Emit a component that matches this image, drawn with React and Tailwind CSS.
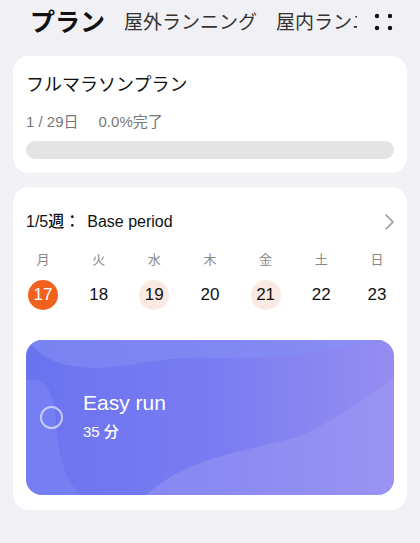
import React from 'react';

const days = [
    { w: '月', d: 17, state: 'today' },
    { w: '火', d: 18 },
    { w: '水', d: 19, state: 'plan' },
    { w: '木', d: 20 },
    { w: '金', d: 21, state: 'plan' },
    { w: '土', d: 22 },
    { w: '日', d: 23 },
];

function DotsIcon() {
    return (
        <svg width="20" height="20" viewBox="0 0 20 20" className="shrink-0">
            <circle cx="3" cy="4" r="2.2" fill="#111" />
            <circle cx="16" cy="4" r="2.2" fill="#111" />
            <circle cx="3" cy="16" r="2.2" fill="#111" />
            <circle cx="16" cy="16" r="2.2" fill="#111" />
        </svg>
    );
}

export default function App() {
    return (
        <div className="w-[420px] h-[543px] bg-[#f1f1f5] overflow-hidden text-[#111]" style={{ fontFamily: '"Liberation Sans", "Noto Sans CJK JP", sans-serif' }}>
            {/* header tabs */}
            <div className="h-[44px] flex items-center pl-[30px] pr-[26px]">
                <div className="flex-1 flex items-center gap-[19px] overflow-hidden whitespace-nowrap">
                    <span className="text-[25px] font-bold leading-[32px]">プラン</span>
                    <span className="text-[19px] leading-[28px] text-[#333] pt-[1px]">屋外ランニング</span>
                    <span className="text-[19px] leading-[28px] text-[#333] pt-[1px]">屋内ランニング</span>
                </div>
                <div className="pl-[17px] bg-[#f1f1f5]">
                    <DotsIcon />
                </div>
            </div>

            {/* plan card */}
            <div className="mx-[13px] mt-[12px] bg-white rounded-[16px] px-[13px] pt-[16px] pb-[14px]">
                <div className="text-[18px] leading-[26px]">フルマラソンプラン</div>
                <div className="mt-[14px] text-[15px] leading-[20px] text-[#777] flex gap-[20px]">
                    <span>1 / 29日</span>
                    <span>0.0%完了</span>
                </div>
                <div className="mt-[9px] h-[18px] rounded-full bg-[#e4e4e4]" />
            </div>

            {/* week card */}
            <div className="mx-[13px] mt-[14px] bg-white rounded-[16px] px-[13px] pt-[23px] pb-[15px]">
                <div className="flex items-center h-[24px]">
                    <span className="text-[16px] leading-[24px] font-medium">1/5週：</span>
                    <span className="text-[16px] leading-[24px] ml-[7px]">Base period</span>
                    <svg className="ml-auto mr-[-1px]" width="12" height="18" viewBox="0 0 12 18">
                        <path d="M3 2 L10 9 L3 16" fill="none" stroke="#999" strokeWidth="1.6" strokeLinecap="round" strokeLinejoin="round" />
                    </svg>
                </div>
                <div className="mt-[16px] flex justify-between px-[2px]">
                    {days.map(day => (
                        <div key={day.w} className="w-[30px] flex flex-col items-center">
                            <span className="text-[13px] leading-[20px] text-[#888]">{day.w}</span>
                            <span className={
                                'mt-[10px] w-[30px] h-[30px] rounded-full flex items-center justify-center text-[17px] font-medium ' +
                                (day.state === 'today' ? 'bg-[#f2621f] text-white' : day.state === 'plan' ? 'bg-[#fbeae3] text-[#111]' : 'text-[#111]')
                            }>{day.d}</span>
                        </div>
                    ))}
                </div>

                <div className="relative mt-[30px] h-[155px] rounded-[16px] overflow-hidden bg-gradient-to-r from-[#6a73ef] via-[#787cf2] to-[#968df1]">
                    <svg className="absolute inset-0" width="368" height="155" viewBox="0 0 368 155" preserveAspectRatio="none">
                        <path d="M0 0 H368 V0 C300 10 250 20 180 18 C120 16 90 35 40 25 C20 20 10 10 0 0 Z" fill="#8590f4" opacity="0.55" />
                        <path d="M368 40 C330 60 300 90 260 100 C200 115 160 120 120 155 H368 Z" fill="#a09cf5" opacity="0.45" />
                        <path d="M0 40 C20 38 28 50 30 80 C32 120 40 140 55 155 H0 Z" fill="#7c86f3" opacity="0.6" />
                    </svg>
                    <div className="relative h-full flex items-center pl-[14px]">
                        <span className="w-[23px] h-[23px] rounded-full border-[2px] border-white/60" />
                        <div className="ml-[20px] text-white -mt-[4px]">
                            <div className="text-[21px] leading-[28px]">Easy run</div>
                            <div className="text-[15px] leading-[22px] mt-[4px] font-medium">35 分</div>
                        </div>
                    </div>
                </div>
            </div>
        </div>
    );
}
